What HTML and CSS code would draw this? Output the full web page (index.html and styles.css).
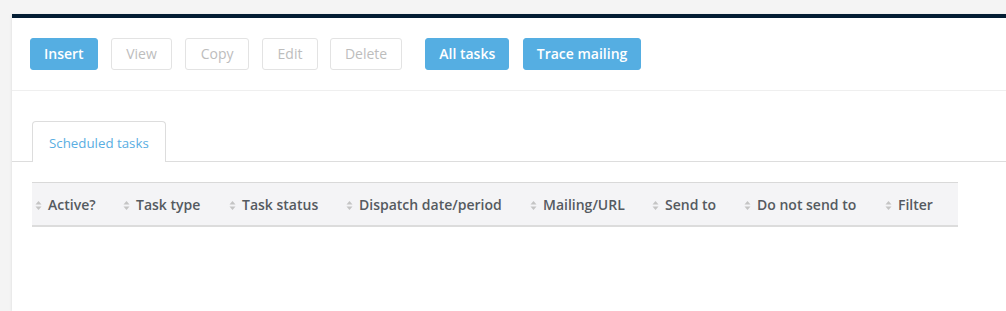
FILE: index.html
```html
<!DOCTYPE html>
<html>
<head>
<meta charset="utf-8">
<link rel="stylesheet" href="styles.css">
</head>
<body>
<div class="panel">
  <div class="toolbar">
    <button class="btn btn-primary">Insert</button>
    <button class="btn btn-disabled">View</button>
    <button class="btn btn-disabled">Copy</button>
    <button class="btn btn-disabled">Edit</button>
    <button class="btn btn-disabled btn-delete">Delete</button>
    <button class="btn btn-primary btn-sep">All tasks</button>
    <button class="btn btn-primary btn-trace">Trace mailing</button>
  </div>
  <div class="tabs">
    <div class="tab">Scheduled tasks</div>
  </div>
  <div class="table-wrap">
    <table class="grid">
      <colgroup>
        <col class="c1"><col class="c2"><col class="c3"><col class="c4">
        <col class="c5"><col class="c6"><col class="c7"><col class="c8">
      </colgroup>
      <thead>
        <tr>
          <th><span class="sort"><svg width="7" height="11" viewBox="0 0 7 11"><path d="M3.5 1 L6.5 4.5 L0.5 4.5 Z M3.5 10 L6.5 6.5 L0.5 6.5 Z" fill="#c4c4c4"/></svg></span>Active?</th>
          <th><span class="sort"><svg width="7" height="11" viewBox="0 0 7 11"><path d="M3.5 1 L6.5 4.5 L0.5 4.5 Z M3.5 10 L6.5 6.5 L0.5 6.5 Z" fill="#c4c4c4"/></svg></span>Task type</th>
          <th><span class="sort"><svg width="7" height="11" viewBox="0 0 7 11"><path d="M3.5 1 L6.5 4.5 L0.5 4.5 Z M3.5 10 L6.5 6.5 L0.5 6.5 Z" fill="#c4c4c4"/></svg></span>Task status</th>
          <th><span class="sort"><svg width="7" height="11" viewBox="0 0 7 11"><path d="M3.5 1 L6.5 4.5 L0.5 4.5 Z M3.5 10 L6.5 6.5 L0.5 6.5 Z" fill="#c4c4c4"/></svg></span>Dispatch date/period</th>
          <th><span class="sort"><svg width="7" height="11" viewBox="0 0 7 11"><path d="M3.5 1 L6.5 4.5 L0.5 4.5 Z M3.5 10 L6.5 6.5 L0.5 6.5 Z" fill="#c4c4c4"/></svg></span>Mailing/URL</th>
          <th><span class="sort"><svg width="7" height="11" viewBox="0 0 7 11"><path d="M3.5 1 L6.5 4.5 L0.5 4.5 Z M3.5 10 L6.5 6.5 L0.5 6.5 Z" fill="#c4c4c4"/></svg></span>Send to</th>
          <th><span class="sort"><svg width="7" height="11" viewBox="0 0 7 11"><path d="M3.5 1 L6.5 4.5 L0.5 4.5 Z M3.5 10 L6.5 6.5 L0.5 6.5 Z" fill="#c4c4c4"/></svg></span>Do not send to</th>
          <th><span class="sort"><svg width="7" height="11" viewBox="0 0 7 11"><path d="M3.5 1 L6.5 4.5 L0.5 4.5 Z M3.5 10 L6.5 6.5 L0.5 6.5 Z" fill="#c4c4c4"/></svg></span>Filter</th>
        </tr>
      </thead>
    </table>
  </div>
</div>
</body>
</html>
```
FILE: styles.css
```css
html, body {
  margin: 0;
  padding: 0;
  background: #f4f4f4;
  font-family: "Open Sans", "Liberation Sans", sans-serif;
  height: 100%;
  overflow: hidden;
}
.panel {
  margin: 14px 0 0 12px;
  background: #ffffff;
  border-top: 4px solid #031d33;
  box-shadow: -1px 0 2px rgba(0,0,0,0.06);
  height: 293px;
}
.toolbar {
  display: flex;
  align-items: center;
  gap: 13px;
  padding: 20px 18px 20px;
  border-bottom: 1px solid #efefef;
}
.btn {
  height: 32px;
  padding: 0 14px;
  border-radius: 3px;
  font-family: "Open Sans", "Liberation Sans", sans-serif;
  font-size: 14px;
  line-height: 30px;
  box-sizing: border-box;
  cursor: pointer;
}
.btn-primary {
  background: #55aee2;
  border: 1px solid #55aee2;
  color: #ffffff;
  font-weight: 600;
  padding: 0 13px;
}
.btn-disabled {
  background: #ffffff;
  border: 1px solid #e3e3e3;
  color: #bdbdbd;
  font-weight: 400;
  padding: 0 14.5px;
}
.btn-delete {
  margin-left: -1px;
  padding: 0 14px;
}
.btn-sep {
  margin-left: 10px;
}
.btn-trace {
  margin-left: 1px;
  padding: 0 12.5px;
}
.tabs {
  display: flex;
  padding: 30px 20px 0;
  border-bottom: 1px solid #dddddd;
}
.tab {
  box-sizing: border-box;
  height: 41px;
  padding: 0 16px;
  line-height: 42px;
  font-size: 13.3px;
  color: #5aaee2;
  border: 1px solid #dddddd;
  border-bottom: none;
  border-radius: 4px 4px 0 0;
  background: #ffffff;
  margin-bottom: -1px;
}
.table-wrap {
  padding: 20px 20px 0;
}
.grid {
  width: 926px;
  table-layout: fixed;
  border-collapse: collapse;
}
.c1 { width: 88px; }
.c2 { width: 106px; }
.c3 { width: 117px; }
.c4 { width: 184px; }
.c5 { width: 122px; }
.c6 { width: 92px; }
.c7 { width: 141px; }
.c8 { width: 76px; }
.grid th {
  height: 42px;
  padding: 0 0 0 3px;
  text-align: left;
  background: #f4f4f6;
  border-top: 1px solid #d9d9d9;
  border-bottom: 2px solid #dcdcdc;
  font-size: 14px;
  font-weight: 600;
  color: #555a60;
  white-space: nowrap;
}
.sort {
  display: inline-block;
  width: 7px;
  height: 11px;
  margin-right: 6px;
  vertical-align: -1px;
}
.sort svg {
  display: block;
}
```
